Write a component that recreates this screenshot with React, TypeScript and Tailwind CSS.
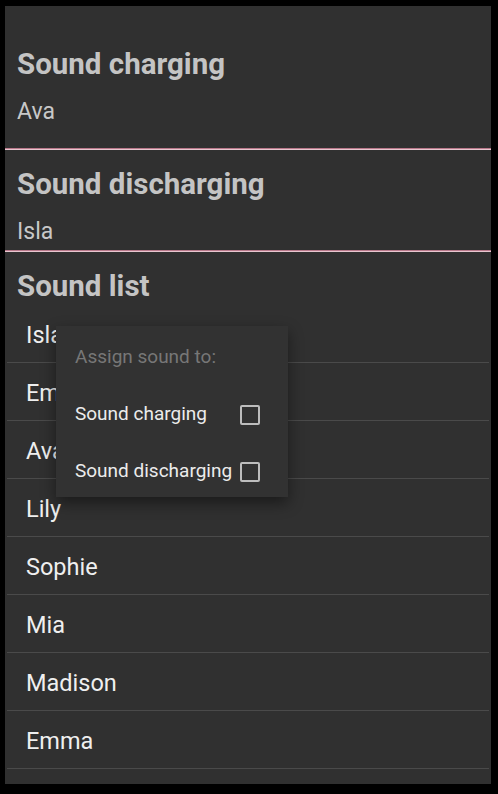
import React from 'react';

const sounds = ['Isla', 'Emma', 'Ava', 'Lily', 'Sophie', 'Mia', 'Madison', 'Emma'];

function PinkDivider() {
  return (
    <div className="flex flex-col">
      <div className="h-px bg-[#b8788a]" />
      <div className="h-px bg-[#e8c6cf]" />
    </div>
  );
}

function PrefRow({ label, value, className }: { label: string; value: string; className: string }) {
  return (
    <div className={className}>
      <div className="h-[34px] leading-[34px] text-[29.5px] font-bold text-[#c4c4c4]">{label}</div>
      <div className="mt-[17px] h-[28px] leading-[28px] text-[23px] text-[#c8c8c8]">{value}</div>
    </div>
  );
}

function Checkbox() {
  return <div className="w-[20px] h-[20px] border-2 border-[#bdbdbd] rounded-[2px]" />;
}

export default function App() {
  return (
    <div className="w-[498px] h-[794px] bg-black pt-[6px] pl-[5px] pr-[7px] pb-[10px] font-['Roboto',sans-serif]">
      <div className="relative h-[778px] bg-[#303030] overflow-hidden">
        <PrefRow label="Sound charging" value="Ava" className="px-[12px] pt-[41px] pb-[22px]" />
        <PinkDivider />
        <PrefRow label="Sound discharging" value="Isla" className="px-[12px] pt-[17px] pb-[4px]" />
        <PinkDivider />

        <div className="px-[12px] pt-[17px] pb-[2px]">
          <div className="h-[34px] leading-[34px] text-[29.5px] font-bold text-[#c4c4c4]">Sound list</div>
        </div>

        <div className="flex flex-col">
          {sounds.map((name, i) => (
            <div key={i} className="flex flex-col">
              <div className="h-[57px] flex items-center pt-[4px] px-[21px] text-[23.5px] text-[#efefef]">{name}</div>
              <div className="mx-[2px] h-px bg-[#4a4a4a]" />
            </div>
          ))}
        </div>

        {/* context popup */}
        <div className="absolute left-[51px] top-[320px] w-[232px] h-[171px] bg-[#323232] shadow-[0_6px_14px_rgba(0,0,0,0.45)] pl-[19px]">
          <div className="mt-[21px] h-[20px] leading-[20px] text-[19px] text-[#777777]">Assign sound to:</div>
          <div className="mt-[19px] h-[57px] flex items-center">
            <div className="w-[165px] text-[19px] text-[#ececec]">Sound charging</div>
            <Checkbox />
          </div>
          <div className="h-[57px] flex items-center">
            <div className="w-[165px] text-[19px] text-[#ececec]">Sound discharging</div>
            <Checkbox />
          </div>
        </div>
      </div>
    </div>
  );
}
